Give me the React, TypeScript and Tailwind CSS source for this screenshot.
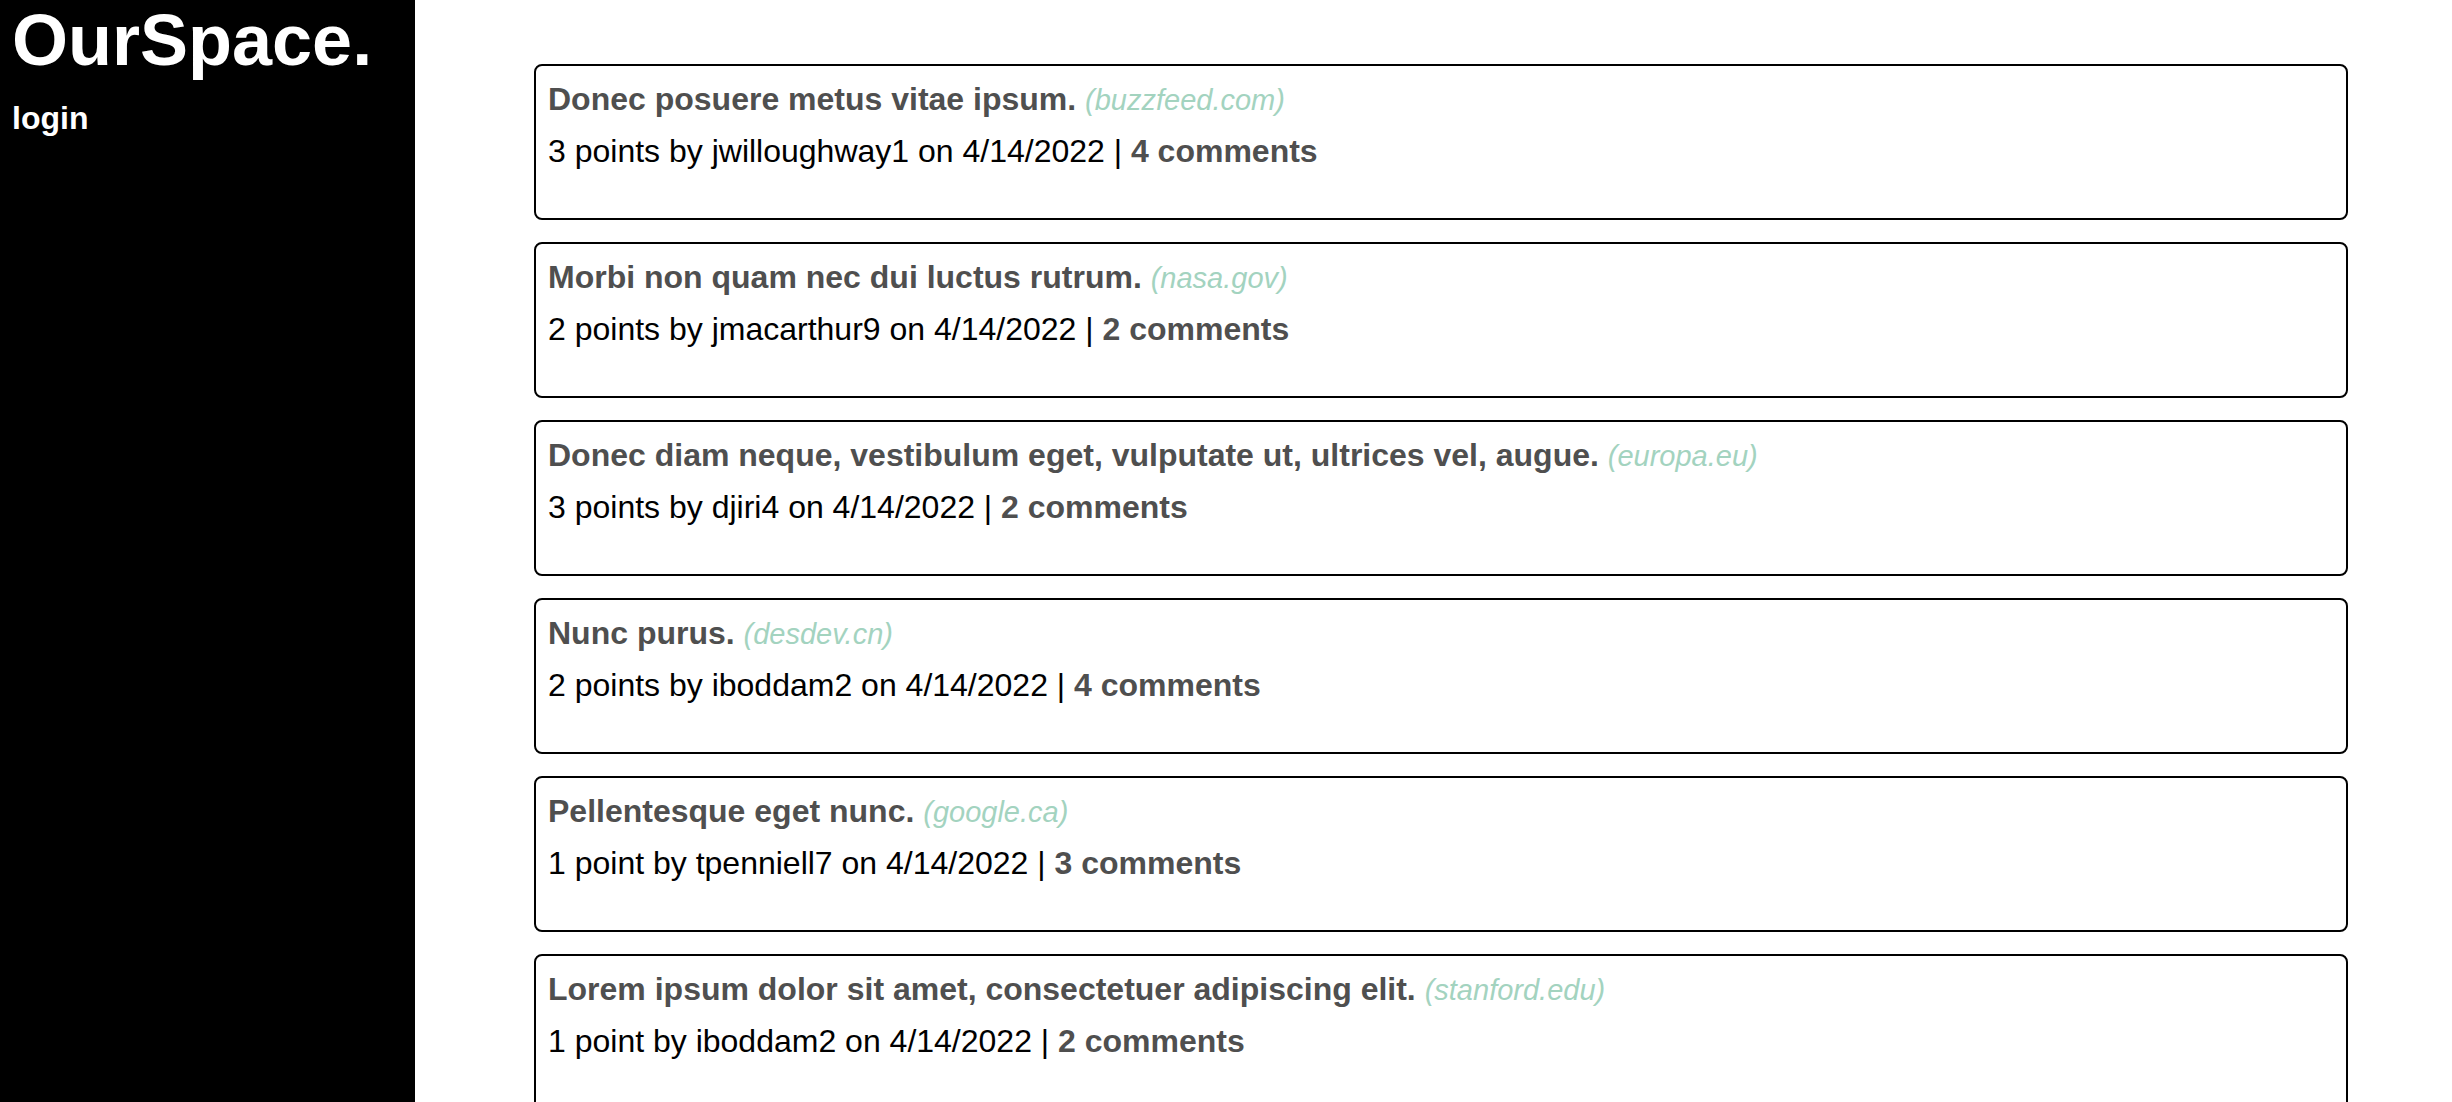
import React from "react";

type Post = {
  title: string;
  domain: string;
  points: number;
  user: string;
  date: string;
  comments: number;
};

const posts: Post[] = [
  { title: "Donec posuere metus vitae ipsum.", domain: "buzzfeed.com", points: 3, user: "jwilloughway1", date: "4/14/2022", comments: 4 },
  { title: "Morbi non quam nec dui luctus rutrum.", domain: "nasa.gov", points: 2, user: "jmacarthur9", date: "4/14/2022", comments: 2 },
  { title: "Donec diam neque, vestibulum eget, vulputate ut, ultrices vel, augue.", domain: "europa.eu", points: 3, user: "djiri4", date: "4/14/2022", comments: 2 },
  { title: "Nunc purus.", domain: "desdev.cn", points: 2, user: "iboddam2", date: "4/14/2022", comments: 4 },
  { title: "Pellentesque eget nunc.", domain: "google.ca", points: 1, user: "tpenniell7", date: "4/14/2022", comments: 3 },
  { title: "Lorem ipsum dolor sit amet, consectetuer adipiscing elit.", domain: "stanford.edu", points: 1, user: "iboddam2", date: "4/14/2022", comments: 2 },
];

function PostCard({ p }: { p: Post }) {
  return (
    <div className="h-[156px] w-[1814px] shrink-0 rounded-[8px] border-2 border-black px-[12px] pt-[15px]">
      <div className="text-[32px] leading-[37px] whitespace-nowrap">
        <span className="font-bold text-[#4f4f4f]">{p.title}</span>{" "}
        <span className="italic text-[29px] text-[#a3d3bf]">({p.domain})</span>
      </div>
      <div className="mt-[14px] text-[32px] leading-[37px] text-black whitespace-nowrap">
        {p.points} {p.points === 1 ? "point" : "points"} by {p.user} on {p.date} |{" "}
        <span className="font-bold text-[#4f4f4f]">{p.comments} comments</span>
      </div>
    </div>
  );
}

export default function App() {
  return (
    <div
      className="flex h-screen w-full overflow-hidden bg-white"
      style={{ fontFamily: '"Liberation Sans", Arial, Helvetica, sans-serif' }}
    >
      <aside className="w-[415px] shrink-0 bg-black pl-[12px] pt-[8px] text-white">
        <h1 className="text-[72px] font-bold leading-[64px]">OurSpace.</h1>
        <div className="mt-[28px] text-[32px] font-bold leading-[37px]">login</div>
      </aside>
      <main className="flex flex-col gap-[22px] pl-[119px] pt-[64px]">
        {posts.map((p, i) => (
          <PostCard key={i} p={p} />
        ))}
      </main>
    </div>
  );
}
